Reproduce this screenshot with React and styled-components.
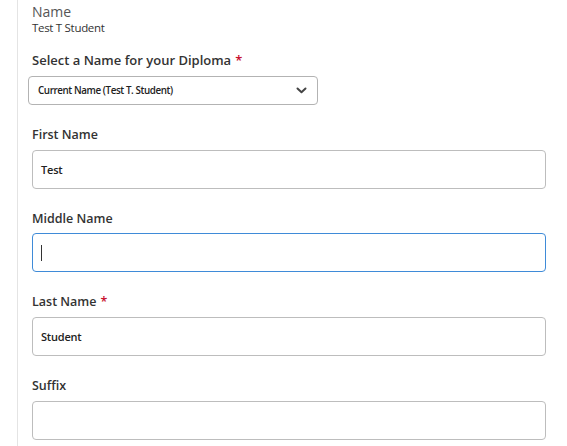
import styled, { createGlobalStyle } from 'styled-components';

const GlobalStyle = createGlobalStyle`
  html, body {
    margin: 0;
    padding: 0;
    background: #fff;
  }
  body {
    font-family: "Open Sans", "Noto Sans", "Liberation Sans", sans-serif;
    color: #333;
  }
`;

const Panel = styled.div`
  margin-left: 17px;
  border-left: 1px solid #e4e4e4;
  padding: 4px 21px 0 14px;
  min-height: 446px;
  box-sizing: border-box;
`;

const Summary = styled.div`
  display: flex;
  flex-direction: column;
`;

const SummaryLabel = styled.div`
  font-size: 14px;
  line-height: 16px;
  color: #555;
`;

const SummaryValue = styled.div`
  font-size: 11.5px;
  line-height: 15px;
  letter-spacing: -0.3px;
  color: #333;
`;

const Field = styled.div`
  display: flex;
  flex-direction: column;
  margin-top: ${(p) => p.$gap || 20}px;
`;

const Label = styled.label`
  font-size: ${(p) => (p.$big ? 13 : 12.5)}px;
  font-weight: 600;
  line-height: 20px;
  color: #333;
  margin-bottom: ${(p) => p.$spacing || 5}px;
`;

const Required = styled.span`
  color: #c8102e;
  margin-left: 4px;
`;

const SelectBox = styled.div`
  display: flex;
  align-items: center;
  justify-content: space-between;
  width: 290px;
  height: 29px;
  margin-left: -4px;
  padding: 0 10px 0 9px;
  box-sizing: border-box;
  border: 1px solid #b3b3b3;
  border-radius: 4px;
  font-size: 9.8px;
  font-weight: 600;
  letter-spacing: -0.4px;
  color: #222;
`;

const Input = styled.div`
  display: flex;
  align-items: center;
  height: 39px;
  margin-top: ${(p) => (p.$focused ? -1 : 0)}px;
  padding: 0 8px;
  box-sizing: border-box;
  border: ${(p) => (p.$focused ? '1.5px solid #3f8bd8' : '1px solid #bdbdbd')};
  border-radius: 4px;
  font-size: 11px;
  font-weight: 600;
  letter-spacing: -0.2px;
  color: #222;
`;

const Caret = styled.span`
  display: inline-block;
  width: 1px;
  height: 16px;
  background: #333;
`;

function Chevron() {
  return (
    <svg width="11" height="7" viewBox="0 0 11 7">
      <path d="M1.5 1.5 L5.5 5.2 L9.5 1.5" fill="none" stroke="#444" strokeWidth="2" strokeLinecap="round" strokeLinejoin="round" />
    </svg>
  );
}

export default function App() {
  return (
    <>
      <GlobalStyle />
      <Panel>
        <Summary>
          <SummaryLabel>Name</SummaryLabel>
          <SummaryValue>Test T Student</SummaryValue>
        </Summary>

        <Field $gap={15}>
          <Label $big $spacing={6}>
            Select a Name for your Diploma<Required>*</Required>
          </Label>
          <SelectBox>
            <span>Current Name (Test T. Student)</span>
            <Chevron />
          </SelectBox>
        </Field>

        <Field>
          <Label>First Name</Label>
          <Input>Test</Input>
        </Field>

        <Field>
          <Label>Middle Name</Label>
          <Input $focused>
            <Caret />
          </Input>
        </Field>

        <Field>
          <Label>
            Last Name<Required>*</Required>
          </Label>
          <Input>Student</Input>
        </Field>

        <Field>
          <Label>Suffix</Label>
          <Input />
        </Field>
      </Panel>
    </>
  );
}
